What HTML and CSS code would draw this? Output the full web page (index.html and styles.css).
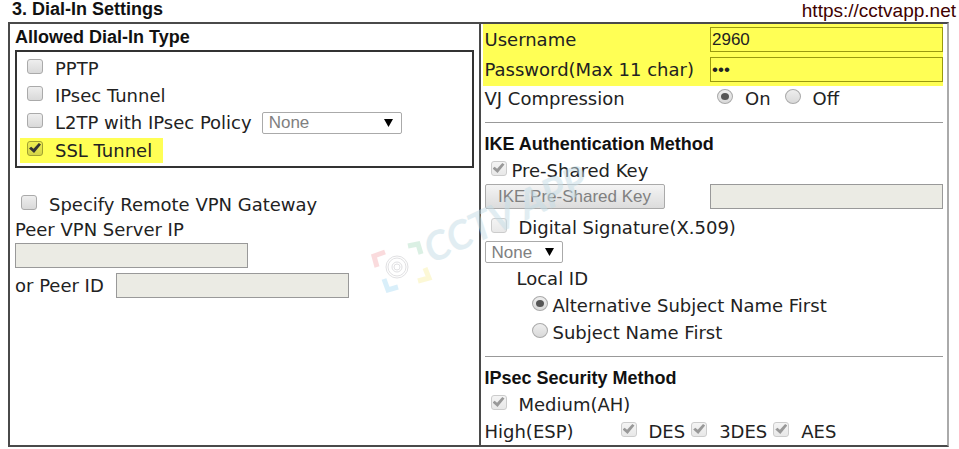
FILE: index.html
```html
<!DOCTYPE html>
<html lang="en">
<head>
    <meta charset="UTF-8">
    <meta name="viewport" content="width=device-width, initial-scale=1.0">
    <title>Dial-In Settings</title>
    <link rel="stylesheet" href="styles.css">
</head>
<body>

    <header class="top">
        <h1>3. Dial-In Settings</h1>
        <a class="site" href="https://cctvapp.net">https://cctvapp.net</a>
    </header>

    <form class="settings">
        <section class="pane left">
            <h2>Allowed Dial-In Type</h2>
            <div class="types">
                <label class="row"><input type="checkbox"> PPTP</label>
                <label class="row"><input type="checkbox"> IPsec Tunnel</label>
                <div class="row">
                    <label class="option"><input type="checkbox"> L2TP with IPsec Policy</label>
                    <select class="policy" aria-label="IPsec Policy" disabled>
                        <option>None</option>
                    </select>
                </div>
                <label class="row marked"><input type="checkbox" checked> SSL Tunnel</label>
            </div>

            <label class="row gateway"><input type="checkbox"> Specify Remote VPN Gateway</label>
            <label class="peer-label" for="peerIp">Peer VPN Server IP</label>
            <input class="field" type="text" id="peerIp" disabled>
            <div class="peer">
                <label for="peerId">or Peer ID</label>
                <input class="field" type="text" id="peerId" disabled>
            </div>
        </section>

        <section class="pane right">
            <div class="login">
                <label for="username">Username</label>
                <input class="field" type="text" id="username" value="2960">
                <label for="password">Password(Max 11 char)</label>
                <input class="field" type="password" id="password" value="abc">
            </div>
            <div class="pair vj">
                <span>VJ Compression</span>
                <div class="radios">
                    <label class="option"><input type="radio" name="vj" checked> On</label>
                    <label class="option"><input type="radio" name="vj"> Off</label>
                </div>
            </div>

            <hr>

            <h2>IKE Authentication Method</h2>
            <label class="row tight"><input type="checkbox" checked disabled> Pre-Shared Key</label>
            <div class="pair psk">
                <button type="button" disabled>IKE Pre-Shared Key</button>
                <input class="field" type="text" aria-label="IKE Pre-Shared Key" disabled>
            </div>
            <label class="row"><input type="checkbox" disabled> Digital Signature(X.509)</label>
            <select class="profile" aria-label="Digital Signature" disabled>
                <option>None</option>
            </select>
            <div class="local">
                <p>Local ID</p>
                <label class="row tight"><input type="radio" name="local" checked> Alternative Subject Name First</label>
                <label class="row tight"><input type="radio" name="local"> Subject Name First</label>
            </div>

            <hr>

            <h2>IPsec Security Method</h2>
            <label class="row"><input type="checkbox" checked disabled> Medium(AH)</label>
            <div class="esp">
                <span class="esp-label">High(ESP)</span>
                <label class="option"><input type="checkbox" checked disabled> DES</label>
                <label class="option"><input type="checkbox" checked disabled> 3DES</label>
                <label class="option"><input type="checkbox" checked disabled> AES</label>
            </div>
        </section>

        <svg class="watermark" width="240" height="150" viewBox="0 -20 240 150" aria-hidden="true">
            <g fill="none" stroke-width="5">
                <path d="M7 97 L4 86 L15 82" stroke="#f6b9bd"/>
                <path d="M38 76 L48 74 L51 84" stroke="#b9e2ca"/>
                <path d="M14 109 L18 120 L28 117" stroke="#b5e0f7"/>
                <path d="M48 111 L59 108 L55 98" stroke="#faf3ae"/>
                <g stroke="#c4c4c8" stroke-width="1">
                    <circle cx="27" cy="97" r="11"/>
                    <circle cx="27" cy="97" r="9"/>
                    <circle cx="27" cy="97" r="5"/>
                    <circle cx="27" cy="97" r="3"/>
                </g>
            </g>
            <text class="brand" transform="translate(62 94) rotate(-25)">CCTV APP</text>
        </svg>
    </form>

</body>
</html>
```

FILE: styles.css
```css
body {
    font-family: Verdana, "DejaVu Sans", sans-serif;
    font-size: 18px;
    line-height: 27px;
    color: #222;
    background-color: #fff;
    margin: 0 0 0 8px;
}

h1, h2 {
    font-family: Arial, "Liberation Sans", sans-serif;
    font-size: 18px;
    font-weight: bold;
    color: #111;
    margin: 0;
}

h1 {
    line-height: 18px;
    padding-left: 4px;
}

h2 {
    line-height: 25px;
}

p {
    margin: 0;
}

.top {
    display: flex;
    justify-content: space-between;
    height: 22px;
    padding-right: 3px;
}

.site {
    font-family: Arial, "Liberation Sans", sans-serif;
    font-size: 19px;
    line-height: 22px;
    color: #400000;
    text-decoration: none;
}

.settings {
    position: relative;
    display: grid;
    grid-template-columns: 1fr 1fr;
    margin-right: 10px;
    border: 2px solid #4a4a4a;
    border-right-color: #aaa;
}

.left {
    padding: 1px 5px 0 5px;
}

.right {
    border-left: 2px solid #4a4a4a;
    padding: 0 4px;
}

/* rows of options */
.row, .option {
    display: flex;
    align-items: center;
    gap: 12px;
}

.row {
    padding-left: 6px;
}

.row .option {
    margin-right: -2px;
}

.tight {
    gap: 5px;
}

.types {
    border: 2px solid #333;
    padding: 3px;
}

.types .row {
    padding-left: 7px;
}

.marked {
    width: fit-content;
    line-height: 25px;
    margin-top: 2px;
    padding-right: 11px;
    background-color: #ffff55;
}

.gateway {
    margin-top: 23px;
}

.peer-label {
    display: block;
    line-height: 23px;
    margin-bottom: 2px;
}

.peer {
    display: flex;
    align-items: center;
    gap: 12px;
    margin-top: 5px;
    line-height: 25px;
}

/* form controls */
input, select, button {
    box-sizing: border-box;
    margin: 0;
    font-family: Arial, "Liberation Sans", sans-serif;
    font-size: 17px;
}

.field {
    display: block;
    width: 233px;
    height: 25px;
    padding: 0 1px;
    border: 1px solid #999;
    color: #222;
}

.field:disabled {
    background-color: #ebebe4;
}

input[type="checkbox"], input[type="radio"] {
    appearance: none;
    flex: none;
    display: grid;
    place-items: center;
    width: 16px;
    height: 15px;
    margin-bottom: 5px;
    border: 1px solid #aaa;
    border-radius: 3px;
    background-image: linear-gradient(#eee, #d9d9d9);
}

input[type="radio"] {
    border-radius: 50%;
}

input[type="checkbox"]:checked::before {
    content: "";
    width: 12px;
    height: 10px;
    background-color: #333;
    clip-path: polygon(0 55%, 18% 38%, 38% 58%, 82% 0, 100% 16%, 42% 100%);
}

input[type="radio"]:checked::before {
    content: "";
    width: 8px;
    height: 7px;
    border-radius: 50%;
    background-color: #555;
}

input[type="checkbox"]:disabled {
    border-color: #ccc;
    background-image: linear-gradient(#f4f4f4, #e8e8e8);
}

input[type="checkbox"]:disabled::before {
    background-color: #999;
}

.marked input[type="checkbox"] {
    border-color: #a0a030;
    background-image: linear-gradient(#eeee50, #d4d448);
}

select {
    appearance: none;
    display: block;
    height: 22px;
    padding: 0 6px;
    border: 1px solid #aaa;
    border-radius: 2px;
    color: #808080;
    opacity: 1;
    background: #fff url("data:image/svg+xml,%3Csvg xmlns='http://www.w3.org/2000/svg' width='9' height='8'%3E%3Cpath d='M0 0h9L4.5 8z'/%3E%3C/svg%3E") no-repeat right 8px center;
}

.policy {
    width: 140px;
}

.profile {
    width: 78px;
}

button {
    width: 180px;
    height: 25px;
    padding: 0;
    border: 1px solid #aaa;
    border-radius: 2px;
    color: #808080;
    background-image: linear-gradient(#f4f4f4, #dcdcdc);
}

/* right pane */
.login, .pair {
    display: grid;
    grid-template-columns: 1fr 233px;
    align-items: center;
}

.login {
    row-gap: 5px;
    margin-left: -2px;
    padding: 3px 0 4px 2px;
    line-height: 25px;
    background-color: #ffff55;
}

.login .field {
    background-color: transparent;
    border-color: #99990f;
}

.vj {
    line-height: 26px;
}

.radios {
    display: flex;
    gap: 14px;
    padding-left: 7px;
}

.psk {
    margin-bottom: 5px;
}

hr {
    margin: 10px 0 9px;
    border: 0;
    border-top: 1px solid #999;
}

.local {
    padding: 2px 0 0 32px;
}

.local .row {
    padding-left: 15px;
}

.esp {
    display: flex;
    gap: 6px;
}

.esp-label {
    width: 130px;
}

.watermark {
    position: absolute;
    left: 360px;
    top: 126px;
    pointer-events: none;
    opacity: 0.5;
}

.brand {
    font-family: Lato, sans-serif;
    font-size: 40px;
    font-style: italic;
    font-weight: bold;
    fill: #c4dde6;
}
```
